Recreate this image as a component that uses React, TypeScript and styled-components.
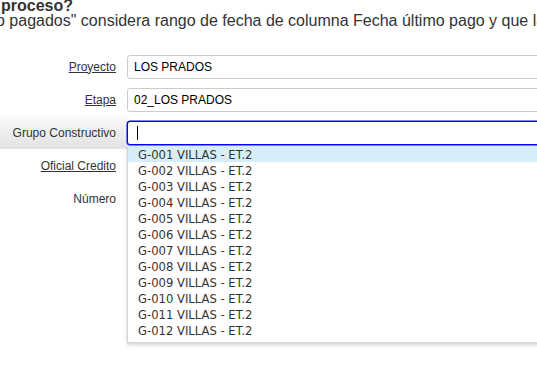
import React from "react"
import styled, { createGlobalStyle } from "styled-components"

const GlobalStyle = createGlobalStyle`
  html, body {
    margin: 0;
    padding: 0;
    background: #fff;
    overflow: hidden;
  }
  body {
    font-family: "Liberation Sans", Arial, sans-serif;
    color: #333;
  }
`

const groups = Array.from({ length: 12 }, (_, i) => `G-${String(i + 1).padStart(3, "0")} VILLAS - ET.2`)

const App = () => {
  return (
    <Page>
      <GlobalStyle />
      <Intro>
        <Title>proceso?</Title>
        <Note>o pagados" considera rango de fecha de columna Fecha último pago y que la fecha</Note>
      </Intro>
      <Form>
        <Row>
          <Label underline>Proyecto</Label>
          <Field>
            <Input defaultValue="LOS PRADOS" readOnly />
          </Field>
        </Row>
        <Row>
          <Label underline>Etapa</Label>
          <Field>
            <Input defaultValue="02_LOS PRADOS" readOnly />
          </Field>
        </Row>
        <Row active>
          <Label>Grupo Constructivo</Label>
          <Field>
            <Input focused defaultValue="" />
            <Caret />
            <Dropdown>
              {groups.map((g, i) => (
                <Option key={g} selected={i === 0}>
                  {g}
                </Option>
              ))}
            </Dropdown>
          </Field>
        </Row>
        <Row>
          <Label underline>Oficial Credito</Label>
          <Field>
            <Input readOnly />
          </Field>
        </Row>
        <Row>
          <Label>Número</Label>
          <Field>
            <Input readOnly />
          </Field>
        </Row>
      </Form>
    </Page>
  )
}

export default App

const Page = styled.div`
  width: 537px;
  height: 369px;
  overflow: hidden;
`

const Intro = styled.div`
  margin-top: -2px;
  font-size: 16px;
  line-height: 15px;
  white-space: nowrap;
`

const Title = styled.div`
  font-weight: 700;
  padding-left: 1px;
`

const Note = styled.div`
  text-indent: -4px;
`

const Form = styled.div`
  margin-top: 22px;
  display: flex;
  flex-direction: column;
`

const Row = styled.div<{ active?: boolean }>`
  display: grid;
  grid-template-columns: 127px 1fr;
  height: 33px;
  align-items: center;
  background: ${({ active }) =>
    active ? "linear-gradient(to bottom, #fbfbfb 0%, #ececec 55%, #e2e2e2 100%)" : "transparent"};
  background-size: 127px 100%;
  background-repeat: no-repeat;
`

const Label = styled.span<{ underline?: boolean }>`
  text-align: right;
  padding-right: 11px;
  font-size: 12px;
  color: #333;
  text-decoration: ${({ underline }) => (underline ? "underline" : "none")};
`

const Field = styled.div`
  position: relative;
  display: flex;
  align-items: center;
`

const Input = styled.input<{ focused?: boolean }>`
  box-sizing: border-box;
  width: 480px;
  height: 24px;
  padding: 0 6px;
  border: 1px solid #ccc;
  border-radius: 3px;
  font-family: "Liberation Sans", Arial, sans-serif;
  font-size: 12px;
  color: #000;
  background: #fff;
  outline: none;
  ${({ focused }) =>
    focused &&
    `
    border: 1px solid #0000ff;
    box-shadow: 0 0 0 0.5px #0000ff;
  `}
`

const Caret = styled.span`
  position: absolute;
  left: 10px;
  top: 5px;
  width: 1px;
  height: 14px;
  background: #000;
`

const Dropdown = styled.ul`
  position: absolute;
  top: 25px;
  left: 0;
  width: 480px;
  margin: 0;
  padding: 0 0 4px;
  list-style: none;
  background: #fff;
  border: 1px solid #d4d4d4;
  border-top: none;
  box-shadow: 0 2px 4px rgba(0, 0, 0, 0.18);
  z-index: 2;
`

const Option = styled.li<{ selected?: boolean }>`
  box-sizing: border-box;
  height: 16px;
  padding: 2px 0 0 10px;
  line-height: 14px;
  font-family: "DejaVu Sans", Verdana, sans-serif;
  font-size: 11.6px;
  color: #333;
  background: ${({ selected }) => (selected ? "#d6eef9" : "transparent")};
`
